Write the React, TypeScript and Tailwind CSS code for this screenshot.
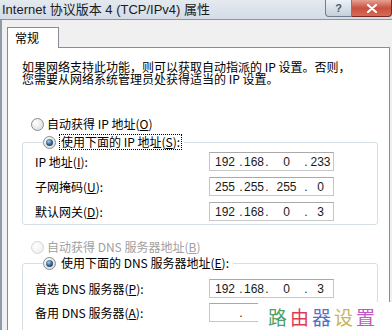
import { Fragment } from "react";

function Radio({ checked, disabled }: { checked?: boolean; disabled?: boolean }) {
  return (
    <span
      className={`flex h-[13px] w-[13px] shrink-0 items-center justify-center rounded-full border ${
        disabled
          ? "border-[#d4d4d4] bg-[radial-gradient(circle_at_35%_35%,#ffffff,#ececec)]"
          : "border-[#8c8c8c] bg-[radial-gradient(circle_at_35%_35%,#ffffff,#d6d6d6)]"
      }`}
    >
      {checked && (
        <span className="h-[7px] w-[7px] rounded-full bg-[radial-gradient(circle_at_40%_35%,#a9cdea,#2a5a88_55%,#13324f)]" />
      )}
    </span>
  );
}

function Acc({ k }: { k: string }) {
  return (
    <>
      (<span className="underline underline-offset-1">{k}</span>)
    </>
  );
}

function IpBox({ parts }: { parts: string[] }) {
  const widths = ["w-[28px]", "w-[22px]", "w-[35px]", "flex-1"];
  return (
    <div className="flex h-[19px] w-[125px] items-center border border-[#c6c6c6] border-t-[#a9a9a9] bg-white pl-px font-['Liberation_Sans',sans-serif] text-[12px] text-[#1a1a1a]">
      {parts.map((p, i) => (
        <Fragment key={i}>
          {i > 0 && <span className="w-[4px] text-center leading-none">.</span>}
          <span className={`${widths[i]} text-center leading-none`}>{p}</span>
        </Fragment>
      ))}
    </div>
  );
}

function Row({ label, parts }: { label: React.ReactNode; parts: string[] }) {
  return (
    <div className="grid h-[19px] grid-cols-[174px_125px] items-center">
      <span className="whitespace-nowrap">{label}</span>
      <IpBox parts={parts} />
    </div>
  );
}

export default function App() {
  return (
    <div className="relative h-[330px] w-[392px] overflow-hidden bg-[#f0f0f0] font-[family-name:'Noto_Sans_CJK_SC',sans-serif] text-[12px] leading-[12px] text-black">
      {/* title bar */}
      <div className="grid h-[20px] grid-cols-[1fr_27px_40px] items-start border-b border-[#8797a8] bg-linear-to-b from-[#e4e9ef] to-[#d4dce6]">
        <span className="whitespace-nowrap pl-[2px] pt-[1px] font-['Liberation_Sans','Noto_Sans_CJK_SC',sans-serif] text-[13px] leading-[17px] text-[#1c1c1c]">
          Internet 协议版本 4 (TCP/IPv4) 属性
        </span>
        <div className="flex h-[17px] items-center justify-center rounded-bl-[4px] border border-t-0 border-[#6f7f90] bg-linear-to-b from-[#eef2f6] to-[#c3cfdb] font-['Liberation_Sans',sans-serif] text-[11px] font-bold text-[#4c5a68]">
          ?
        </div>
        <div className="flex h-[17px] items-center justify-center rounded-br-[4px] border border-t-0 border-l-0 border-[#7a2a22] bg-linear-to-b from-[#e6a091] via-[#c7503e] to-[#d86a55]">
          <svg width="10" height="9" viewBox="0 0 10 9">
            <path d="M1 1 L9 8 M9 1 L1 8" stroke="white" strokeWidth="2.2" strokeLinecap="round" />
          </svg>
        </div>
      </div>

      {/* client area */}
      <div className="h-[310px] border-l-2 border-[#8d9aa8] pl-[5px] pt-[7px]">
        <div className="relative z-10 -mb-px h-[21px] w-[52px] border border-b-0 border-[#898c95] bg-white pl-[7px] pt-[4px] text-[12px]">
          常规
        </div>
        <div className="h-[300px] w-[383px] border border-[#898c95] bg-white pl-[14px] pt-[13px]">
          <p className="whitespace-nowrap leading-[12px]">
            如果网络支持此功能，则可以获取自动指派的 IP 设置。否则，
            <br />
            您需要从网络系统管理员处获得适当的 IP 设置。
          </p>

          <div className="mt-[32px] flex h-[14px] items-center gap-[3px] pl-[9px]">
            <Radio />
            <span>
              自动获得 IP 地址<Acc k="O" />
            </span>
          </div>

          <fieldset className="mt-[4px] w-[356px] rounded-[3px] border border-[#d5dfe5] pb-[3px] pl-[12px]">
            <legend className="ml-[8px] flex h-[14px] items-center gap-[3px] pr-[2px]">
              <Radio checked />
              <span className="border border-dotted border-black px-[1px] py-px">
                使用下面的 IP 地址<Acc k="S" />:
              </span>
            </legend>
            <div className="mt-[3px] flex flex-col gap-[6px]">
              <Row label={<>IP 地址<Acc k="I" />:</>} parts={["192", "168", "0", "233"]} />
              <Row label={<>子网掩码<Acc k="U" />:</>} parts={["255", "255", "255", "0"]} />
              <Row label={<>默认网关<Acc k="D" />:</>} parts={["192", "168", "0", "3"]} />
            </div>
          </fieldset>

          <div className="mt-[15px] flex h-[14px] items-center gap-[3px] pl-[9px] text-[#a0a0a0]">
            <Radio disabled />
            <span>
              自动获得 DNS 服务器地址<Acc k="B" />
            </span>
          </div>

          <fieldset className="mt-[2px] w-[356px] rounded-[3px] border border-[#d5dfe5] pb-[20px] pl-[12px]">
            <legend className="ml-[8px] flex h-[14px] items-center gap-[3px] pr-[2px]">
              <Radio checked />
              <span className="px-[2px]">
                使用下面的 DNS 服务器地址<Acc k="E" />:
              </span>
            </legend>
            <div className="mt-[9px] flex flex-col gap-[5px]">
              <Row label={<>首选 DNS 服务器<Acc k="P" />:</>} parts={["192", "168", "0", "3"]} />
              <Row label={<>备用 DNS 服务器<Acc k="A" />:</>} parts={["", "", "", ""]} />
            </div>
          </fieldset>
        </div>
      </div>

      {/* watermark */}
      <div className="absolute bottom-0 right-0 flex h-[28px] w-[134px] items-center gap-[3px] bg-white pl-[10px] text-[19px] leading-none">
        <span className="text-[#4f9f68]">路</span>
        <span className="text-[#dc3a55]">由</span>
        <span className="text-[#5470c8]">器</span>
        <span className="text-[#c9b35a]">设</span>
        <span className="text-[#c455c9]">置</span>
      </div>
    </div>
  );
}
